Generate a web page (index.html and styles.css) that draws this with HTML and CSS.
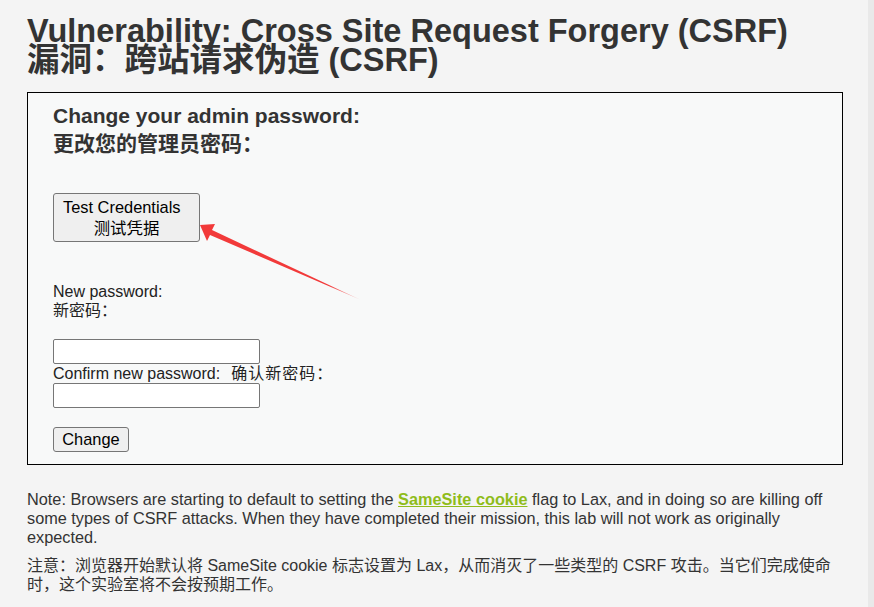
FILE: index.html
```html
<!DOCTYPE html>
<html>
  <head>
    <meta charset="utf-8" />
    <link rel="stylesheet" href="styles.css">
  </head>
  <body>
    <div class="body_padded">
      <h1>Vulnerability: Cross Site Request Forgery (CSRF)<br/>漏洞：跨站请求伪造 (CSRF)</h1>

      <div class="vulnerable_code_area">
        <h3>Change your admin password:<br/>更改您的管理员密码：</h3>
        <button class="test_btn">
          <span class="l1">Test Credentials</span>
          <span class="l2">测试凭据</span>
        </button>
        <svg class="arrow" width="180" height="90" viewBox="0 0 180 90">
          <defs>
            <linearGradient id="fade" x1="0" y1="0" x2="1" y2="0">
              <stop offset="0" stop-color="#f23a3a"/>
              <stop offset="0.8" stop-color="#f23a3a"/>
              <stop offset="1" stop-color="#f23a3a" stop-opacity="0.2"/>
            </linearGradient>
          </defs>
          <polygon points="1,2 16,1 13,7 162,77 11,12 8,18" fill="url(#fade)"/>
        </svg>
        <form class="pw_form">
          <div class="lbl">New password:<br/>新密码：</div>
          <input type="password" class="pw first"/>
          <div class="lbl">Confirm new password:<span class="cn">确认新密码：</span></div>
          <input type="password" class="pw"/>
          <input type="submit" class="change_btn" value="Change"/>
        </form>
      </div>

      <p class="note">Note: Browsers are starting to default to setting the <a href="#">SameSite cookie</a> flag to Lax, and in doing so are killing off some types of CSRF attacks. When they have completed their mission, this lab will not work as originally expected.</p>
      <p class="note zh">注意：浏览器开始默认将 SameSite cookie 标志设置为 Lax，从而消灭了一些类型的 CSRF 攻击。当它们完成使命时，这个实验室将不会按预期工作。</p>
    </div>
  </body>
</html>
```

FILE: styles.css
```css
*{
  box-sizing: border-box;
}
body{
  margin: 0px;
  min-height: 100vh;
  background: #f4f4f4;
  border-right: 6px solid #e9e9e9;
  color: #222;
  font-family: "Liberation Sans", Arial, "Noto Sans CJK SC", sans-serif;
  font-size: 16px;
}
.body_padded{
  padding: 0px 25px 0px 27px;
}
h1{
  margin: 0px;
  padding-top: 17px;
  font-size: 32.5px;
  line-height: 29px;
  color: #333;
}
.vulnerable_code_area{
  position: relative;
  margin-top: 17px;
  border: 1px solid #000;
  background: #f8f9f9;
  padding: 9px 26px 12px 25px;
}
h3{
  margin: 0px;
  font-size: 21px;
  line-height: 28px;
  color: #333;
}
.test_btn{
  display: block;
  margin-top: 35px;
  width: 147px;
  height: 49px;
  padding: 1px 0px 0px 0px;
  font-family: inherit;
  font-size: 16.4px;
  line-height: 21px;
  color: #000;
  background: #efefef;
  border: 1px solid #767676;
  border-radius: 3px;
}
.test_btn .l1{
  display: block;
  text-align: left;
  padding-left: 9px;
}
.test_btn .l2{
  display: block;
  text-align: center;
}
.arrow{
  position: absolute;
  left: 171px;
  top: 130px;
}
.pw_form{
  margin-top: 40px;
}
.lbl{
  line-height: 19px;
}
.lbl .cn{
  margin-left: 11px;
  letter-spacing: 1px;
}
.pw{
  display: block;
  width: 207px;
  height: 25px;
  margin: 0px;
  border: 1px solid #767676;
  border-radius: 2px;
  background: #fff;
}
.pw.first{
  margin-top: 19px;
}
.change_btn{
  display: block;
  margin-top: 19px;
  width: 76px;
  height: 25px;
  padding: 0px;
  font-family: inherit;
  font-size: 16.4px;
  color: #000;
  background: #efefef;
  border: 1px solid #767676;
  border-radius: 3px;
}
.note{
  margin: 25px 0px 0px 0px;
  font-size: 16.3px;
  line-height: 19px;
  color: #333;
}
.note.zh{
  margin-top: 9px;
  font-size: 16px;
}
.note a{
  color: #8fbc1a;
  font-weight: bold;
}
```
